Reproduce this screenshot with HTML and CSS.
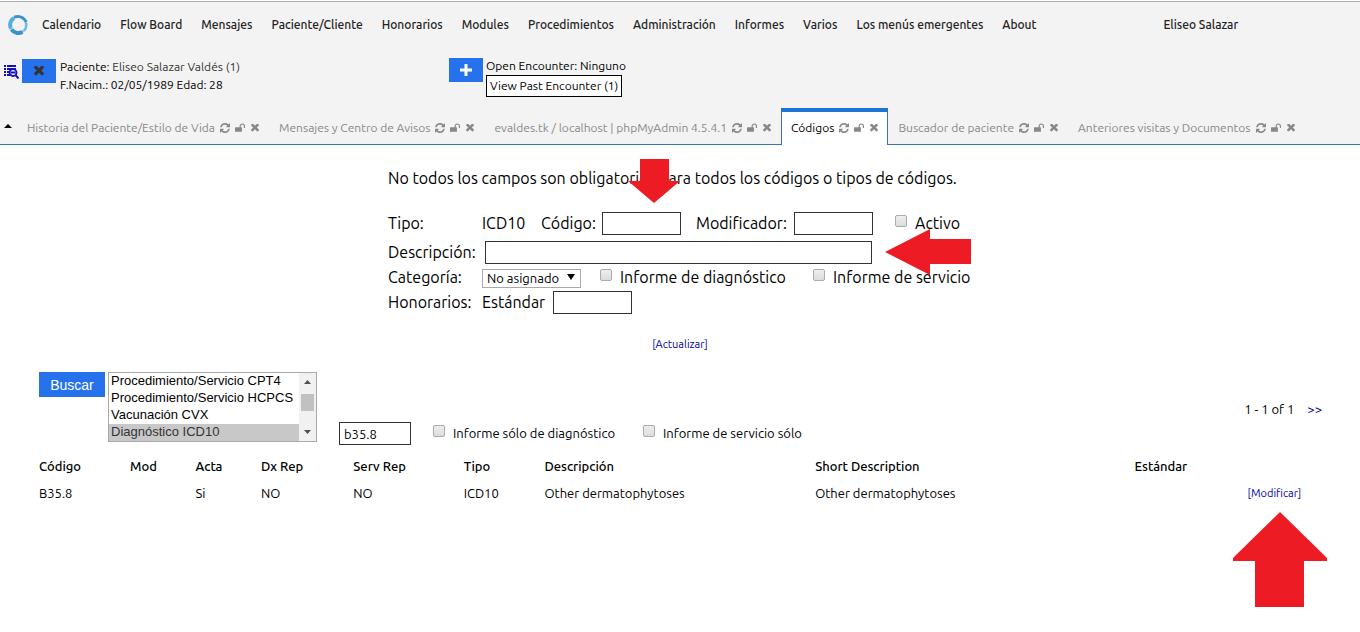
FILE: index.html
```
<!DOCTYPE html>
<html lang="es">
<head>
    <meta charset="UTF-8">
    <title>Códigos</title>
    <link rel="stylesheet" href="styles.css">
</head>
<body>
    <svg class="sprite" aria-hidden="true">
        <symbol id="i-refresh" viewBox="128 128 1536 1536"><path d="M1639 1056q0 5-1 7-64 268-268 434.5t-478 166.5q-146 0-282.5-55t-243.5-157l-129 129q-19 19-45 19t-45-19-19-45v-448q0-26 19-45t45-19h448q26 0 45 19t19 45-19 45l-137 137q71 66 161 102t187 36q134 0 250-65t186-179q11-17 53-117 8-23 30-23h192q13 0 22.5 9.5t9.5 22.5zm25-800v448q0 26-19 45t-45 19h-448q-26 0-45-19t-19-45 19-45l138-138q-148-137-349-137-134 0-250 65t-186 179q-11 17-53 117-8 23-30 23h-199q-13 0-22.5-9.5t-9.5-22.5v-7q65-268 270-434.5t480-166.5q146 0 284 55.5t245 156.5l130-129q19-19 45-19t45 19 19 45z"/></symbol>
        <symbol id="i-unlock" viewBox="64 64 1664 1664"><path d="M1728 576v256q0 26-19 45t-45 19h-64q-26 0-45-19t-19-45v-256q0-106-75-181t-181-75-181 75-75 181v192h96q40 0 68 28t28 68v576q0 40-28 68t-68 28h-960q-40 0-68-28t-28-68v-576q0-40 28-68t68-28h672v-192q0-185 131.5-316.5t316.5-131.5 316.5 131.5 131.5 316.5z"/></symbol>
        <symbol id="i-times" viewBox="110 434 1188 1188"><path d="M1298 1322q0 40-28 68l-136 136q-28 28-68 28t-68-28l-294-294-294 294q-28 28-68 28t-68-28l-136-136q-28-28-28-68t28-68l294-294-294-294q-28-28-28-68t28-68l136-136q28-28 68-28t68 28l294 294 294-294q28-28 68-28t68 28l136 136q28 28 28 68t-28 68l-294 294 294 294q28 28 28 68z"/></symbol>
    </svg>

    <header class="top">
        <nav class="menu">
            <svg class="logo" viewBox="0 0 20 20" fill="none">
                <circle cx="10" cy="10" r="8" fill="none" stroke="#8cc6e6" stroke-width="2"/>
                <path d="M6 3A8 8 0 0 0 3 13.500" fill="none" stroke="#58aedd" stroke-width="4"/>
                <path d="M3.500 14.500A8.500 8.500 0 0 0 14.500 17" fill="none" stroke="#3b93cb" stroke-width="4"/>
                <path d="M6 2Q14-.5 18.500 7" fill="none" stroke="#3b93cb" stroke-width="2.500"/>
                <path d="M18.500 8Q19 13 16 16" fill="none" stroke="#6fb9e0" stroke-width="2"/>
            </svg>
            <a href="#">Calendario</a>
            <a href="#">Flow Board</a>
            <a href="#">Mensajes</a>
            <a href="#">Paciente/Cliente</a>
            <a href="#">Honorarios</a>
            <a href="#">Modules</a>
            <a href="#">Procedimientos</a>
            <a href="#">Administración</a>
            <a href="#">Informes</a>
            <a href="#">Varios</a>
            <a href="#">Los menús emergentes</a>
            <a href="#">About</a>
            <a href="#" class="user">Eliseo Salazar</a>
        </nav>

        <div class="patient-bar">
            <div class="patient">
                <svg class="list-icon" viewBox="0 0 15 15">
                    <path d="M0 1h2v2H0zM3 1h9v2H3zM0 4h2v2H0zM3 4h9v2H3zM0 7h2v2H0zM3 7h3v2H3zM0 10h2v2H0zM3 10h3v2H3z" fill="#1410c0"/>
                    <circle cx="9" cy="8.500" r="3.500" fill="#f3f3f3" stroke="#1410c0" stroke-width="1.800"/>
                    <path d="M6.500 8.500h5M11.500 11l3 3.500" stroke="#1410c0" stroke-width="2"/>
                </svg>
                <button class="btn-icon" aria-label="Cerrar paciente"><svg class="dark"><use href="#i-times"/></svg></button>
                <div class="info">
                    <div>Paciente: <a href="#">Eliseo Salazar Valdés (1)</a></div>
                    <div>F.Nacim.: 02/05/1989 Edad: 28</div>
                </div>
            </div>
            <div class="encounter">
                <button class="btn-icon" aria-label="Nuevo encuentro"><svg viewBox="0 0 12 12"><path d="M4.500 0h3v4.500h4.500v3h-4.500v4.500h-3v-4.500h-4.500v-3h4.500z"/></svg></button>
                <div class="info">
                    <div>Open Encounter: Ninguno</div>
                    <button class="past">View Past Encounter (1)</button>
                </div>
            </div>
        </div>

        <div class="tabs">
            <span class="caret"></span>
            <div class="tab">Historia del Paciente/Estilo de Vida <svg><use href="#i-refresh"/></svg><svg><use href="#i-unlock"/></svg><svg class="x"><use href="#i-times"/></svg></div>
            <div class="tab">Mensajes y Centro de Avisos <svg><use href="#i-refresh"/></svg><svg><use href="#i-unlock"/></svg><svg class="x"><use href="#i-times"/></svg></div>
            <div class="tab">evaldes.tk / localhost | phpMyAdmin 4.5.4.1 <svg><use href="#i-refresh"/></svg><svg><use href="#i-unlock"/></svg><svg class="x"><use href="#i-times"/></svg></div>
            <div class="tab active">Códigos <svg><use href="#i-refresh"/></svg><svg><use href="#i-unlock"/></svg><svg class="x"><use href="#i-times"/></svg></div>
            <div class="tab">Buscador de paciente <svg><use href="#i-refresh"/></svg><svg><use href="#i-unlock"/></svg><svg class="x"><use href="#i-times"/></svg></div>
            <div class="tab">Anteriores visitas y Documentos <svg><use href="#i-refresh"/></svg><svg><use href="#i-unlock"/></svg><svg class="x"><use href="#i-times"/></svg></div>
        </div>
    </header>

    <main>
        <form class="code-form">
            <p class="note">No todos los campos son obligatorios para todos los códigos o tipos de códigos.</p>
            <div class="row">
                <span class="name">Tipo:</span>
                <span class="type">ICD10</span>
                <label class="lbl-code" for="code">Código:</label>
                <input class="box" type="text" id="code">
                <label class="lbl-mod" for="modifier">Modificador:</label>
                <input class="box" type="text" id="modifier">
                <label class="check check-active"><input type="checkbox"> Activo</label>
            </div>
            <div class="row tight">
                <label class="name" for="desc">Descripción:</label>
                <input class="box wide" type="text" id="desc">
            </div>
            <div class="row short tight">
                <label class="name" for="cat">Categoría:</label>
                <div class="select-wrap">
                    <select id="cat"><option>No asignado</option></select>
                </div>
                <label class="check check-dx"><input type="checkbox"> Informe de diagnóstico</label>
                <label class="check check-serv"><input type="checkbox"> Informe de servicio</label>
            </div>
            <div class="row">
                <span class="name">Honorarios:</span>
                <label class="lbl-fee" for="fee">Estándar</label>
                <input class="box" type="text" id="fee">
            </div>
            <p class="update"><a href="#">[Actualizar]</a></p>

            <svg class="arrow arrow-down" viewBox="0 0 52 44"><path d="M12 0h29v22h11L26 44L0 22h12z"/></svg>
            <svg class="arrow arrow-left" viewBox="0 0 86 46"><path d="M0 23L45 0v10h41v25H45v11z"/></svg>
        </form>

        <form class="search">
            <button class="btn-search" type="button">Buscar</button>
            <div class="listbox">
                <select size="4" aria-label="Tipo de código">
                    <option>Procedimiento/Servicio CPT4</option>
                    <option>Procedimiento/Servicio HCPCS</option>
                    <option>Vacunación CVX</option>
                    <option selected>Diagnóstico ICD10</option>
                </select>
                <div class="scrollbar"><i class="up"></i><i class="thumb"></i><i class="down"></i></div>
            </div>
            <input class="box query" type="text" value="b35.8" aria-label="Texto a buscar">
            <label class="check small"><input type="checkbox"> Informe sólo de diagnóstico</label>
            <label class="check small"><input type="checkbox"> Informe de servicio sólo</label>
            <div class="pager">1 - 1 of 1 <a href="#">&gt;&gt;</a></div>
        </form>

        <table class="results">
            <thead>
                <tr>
                    <th class="c-code">Código</th>
                    <th class="c-mod">Mod</th>
                    <th class="c-act">Acta</th>
                    <th class="c-dx">Dx Rep</th>
                    <th class="c-serv">Serv Rep</th>
                    <th class="c-type">Tipo</th>
                    <th class="c-desc">Descripción</th>
                    <th class="c-short">Short Description</th>
                    <th class="c-fee">Estándar</th>
                    <th></th>
                </tr>
            </thead>
            <tbody>
                <tr>
                    <td>B35.8</td>
                    <td></td>
                    <td>Si</td>
                    <td>NO</td>
                    <td>NO</td>
                    <td>ICD10</td>
                    <td>Other dermatophytoses</td>
                    <td>Other dermatophytoses</td>
                    <td></td>
                    <td>
                        <div class="edit">
                            <a href="#">[Modificar]</a>
                            <svg class="arrow arrow-up" viewBox="0 0 94 95"><path d="M47 0L94 46v3H71v46H22V49H0v-3z"/></svg>
                        </div>
                    </td>
                </tr>
            </tbody>
        </table>
    </main>
</body>
</html>
```
FILE: styles.css
```
* {
    box-sizing: border-box;
}
body {
    display: flow-root;
    min-height: 100vh;
    margin: 0;
    font-family: Ubuntu, "Noto Sans", sans-serif;
    font-size: 12px;
    color: #000;
    background-color: #fff;
}
a {
    color: #0000a0;
    text-decoration: none;
}
button, input, select {
    font-family: inherit;
    border-radius: 0;
    margin: 0;
}
svg {
    fill: currentColor;
}
.sprite {
    display: none;
}

/* cabecera */
.top {
    margin-top: 1px;
    border-top: 1px solid #b0b0b0;
    background-color: #f3f3f3;
}
.menu {
    display: flex;
    align-items: center;
    gap: 19px;
    height: 45px;
    padding-left: 8px;
}
.menu a {
    color: #222;
    font-weight: 500;
    white-space: nowrap;
}
.menu .logo {
    width: 20px;
    height: 20px;
    margin-right: -5px;
}
.menu .user {
    margin-left: 108px;
}
.patient-bar {
    display: flex;
    height: 61px;
    padding: 10px 0 0 4px;
}
.patient, .encounter {
    display: flex;
    align-items: flex-start;
}
.patient {
    width: 445px;
}
.list-icon {
    width: 15px;
    height: 15px;
    margin: 7px 3px 0 0;
}
.btn-icon {
    display: flex;
    align-items: center;
    justify-content: center;
    width: 34px;
    height: 24px;
    margin: 1px 3px 0 0;
    padding: 0;
    border: 0;
    background-color: #2672ec;
    color: #fff;
}
.patient .btn-icon {
    margin: 2px 4px 0 0;
}
.btn-icon svg {
    width: 12px;
    height: 12px;
}
.btn-icon svg.dark {
    width: 10px;
    height: 10px;
    color: #333;
}
.info {
    line-height: 18px;
}
.patient .info {
    padding-top: 1px;
}
.info a {
    color: #333;
}
.past {
    display: block;
    height: 22px;
    padding: 0 3px 2px;
    border: 1px solid #000;
    background-color: #fff;
    font-size: 12px;
    color: #000;
}

/* pestañas */
.tabs {
    display: flex;
    height: 37px;
    border-bottom: 1px solid #3a72ad;
}
.caret {
    width: 8px;
    height: 4px;
    margin: 16px 5px 0 4px;
    background-color: #000;
    clip-path: polygon(50% 0, 100% 100%, 0 100%);
}
.tab {
    display: flex;
    align-items: center;
    gap: 5px;
    height: 37px;
    padding: 2px 10px 0;
    color: #888;
    white-space: nowrap;
}
.tab svg {
    width: 10px;
    height: 10px;
}
.tab .x {
    width: 8px;
    height: 8px;
    margin-left: 1px;
}
.tab.active {
    border: 1px solid #3a72ad;
    border-top: 4px solid #1b74d2;
    border-bottom: 0;
    padding: 0 9px 2px;
    background-color: #fff;
    color: #000;
}
.tab.active svg {
    color: #888;
}

/* formulario */
.code-form {
    position: relative;
    width: 584px;
    margin: 0 auto;
    padding-top: 21px;
    font-size: 16px;
}
.note {
    margin: 0 0 22px;
    line-height: 24px;
    white-space: nowrap;
}
.row {
    display: flex;
    align-items: center;
    height: 23px;
    margin-bottom: 6px;
    white-space: nowrap;
}
.row > label, .row > span {
    padding-bottom: 2px;
}
.row.tight {
    margin-bottom: 3px;
}
.row.short {
    height: 21px;
}
.name {
    width: 94px;
}
.box {
    width: 79px;
    height: 23px;
    padding: 0 4px;
    border: 1px solid #333;
    background-color: #fff;
    font-size: 13px;
}
.box.wide {
    width: 387px;
    margin-left: 3px;
}
.type {
    width: 59px;
}
.lbl-code {
    width: 61px;
}
.lbl-mod {
    width: 98px;
    margin-left: 15px;
}
.lbl-fee {
    width: 71px;
}
.check {
    display: flex;
    align-items: center;
    gap: 8px;
}
.check input {
    appearance: none;
    width: 12px;
    height: 12px;
    margin-bottom: 3px;
    border: 1px solid #aaa;
    border-radius: 2px;
    background: linear-gradient(#eee, #dcdcdc);
}
.check-active {
    margin-left: 22px;
}
.select-wrap {
    position: relative;
    width: 99px;
    height: 19px;
}
.select-wrap::after {
    content: "";
    position: absolute;
    right: 6px;
    top: 6px;
    width: 8px;
    height: 6px;
    background-color: #000;
    clip-path: polygon(0 0, 100% 0, 50% 100%);
}
.select-wrap select {
    appearance: none;
    width: 100%;
    height: 19px;
    padding: 0 4px;
    border: 1px solid #a9a9a9;
    background-color: #fff;
    font-size: 13px;
    color: #000;
}
.check-dx {
    width: 213px;
    margin-left: 19px;
}
.update {
    margin: 22px 0 0;
    text-align: center;
    font-size: 11px;
    line-height: 16px;
}
.arrow {
    position: absolute;
    fill: #ed1c24;
}
.arrow-down {
    left: 240px;
    top: 14px;
    width: 52px;
    height: 44px;
}
.arrow-left {
    left: 497px;
    top: 84px;
    width: 86px;
    height: 46px;
}

/* búsqueda */
.search {
    display: flex;
    align-items: flex-end;
    height: 73px;
    margin: 20px 38px 0 39px;
    font-size: 13px;
}
.btn-search {
    align-self: flex-start;
    width: 66px;
    height: 25px;
    margin-right: 3px;
    padding: 0;
    border: 0;
    background-color: #2672ec;
    color: #fff;
    font-family: "Liberation Sans", sans-serif;
    font-size: 14px;
}
.listbox {
    display: flex;
    align-self: flex-start;
    width: 209px;
    height: 70px;
    margin-right: 22px;
    border: 1px solid #a9a9a9;
}
.listbox select {
    flex: 1;
    height: 68px;
    padding: 0;
    border: 0;
    outline: 0;
    overflow: hidden;
    background-color: #fff;
    color: #000;
    font-family: "Liberation Sans", sans-serif;
    font-size: 13px;
}
.listbox option {
    height: 17px;
    min-height: 17px;
    padding: 0 2px;
    line-height: 17px;
}
.listbox option:checked {
    background: #c8c8c8 linear-gradient(#c8c8c8, #c8c8c8);
    color: #333;
}
.scrollbar {
    display: flex;
    flex-direction: column;
    align-items: center;
    width: 17px;
    padding: 7px 0;
    background-color: #f1f1f1;
}
.scrollbar .up, .scrollbar .down {
    width: 7px;
    height: 4px;
    background-color: #505050;
    clip-path: polygon(50% 0, 100% 100%, 0 100%);
}
.scrollbar .down {
    margin-top: auto;
    clip-path: polygon(0 0, 100% 0, 50% 100%);
}
.scrollbar .thumb {
    width: 13px;
    height: 17px;
    margin-top: 10px;
    background-color: #c1c1c1;
}
.query {
    width: 72px;
}
.small {
    width: 210px;
    height: 25px;
    margin-left: 22px;
    white-space: nowrap;
}
.small + .small {
    margin-left: 0;
}
.pager {
    margin: 0 0 26px auto;
    line-height: 20px;
}
.pager a {
    margin-left: 10px;
}

/* resultados */
.results {
    width: calc(100% - 77px);
    margin: 7px 38px 0 39px;
    border-collapse: collapse;
    table-layout: fixed;
    font-size: 13px;
}
.results th, .results td {
    height: 27px;
    padding: 0;
    text-align: left;
    white-space: nowrap;
}
.results th {
    font-weight: 500;
}
.c-code { width: 7.1%; }
.c-mod { width: 5.1%; }
.c-act { width: 5.1%; }
.c-dx { width: 7.2%; }
.c-serv { width: 8.6%; }
.c-type { width: 6.3%; }
.c-desc { width: 21.1%; }
.c-short { width: 24.9%; }
.c-fee { width: 8.8%; }
.edit {
    position: relative;
    font-size: 11px;
}
.arrow-up {
    left: -15px;
    top: 25px;
    width: 94px;
    height: 95px;
}
```
